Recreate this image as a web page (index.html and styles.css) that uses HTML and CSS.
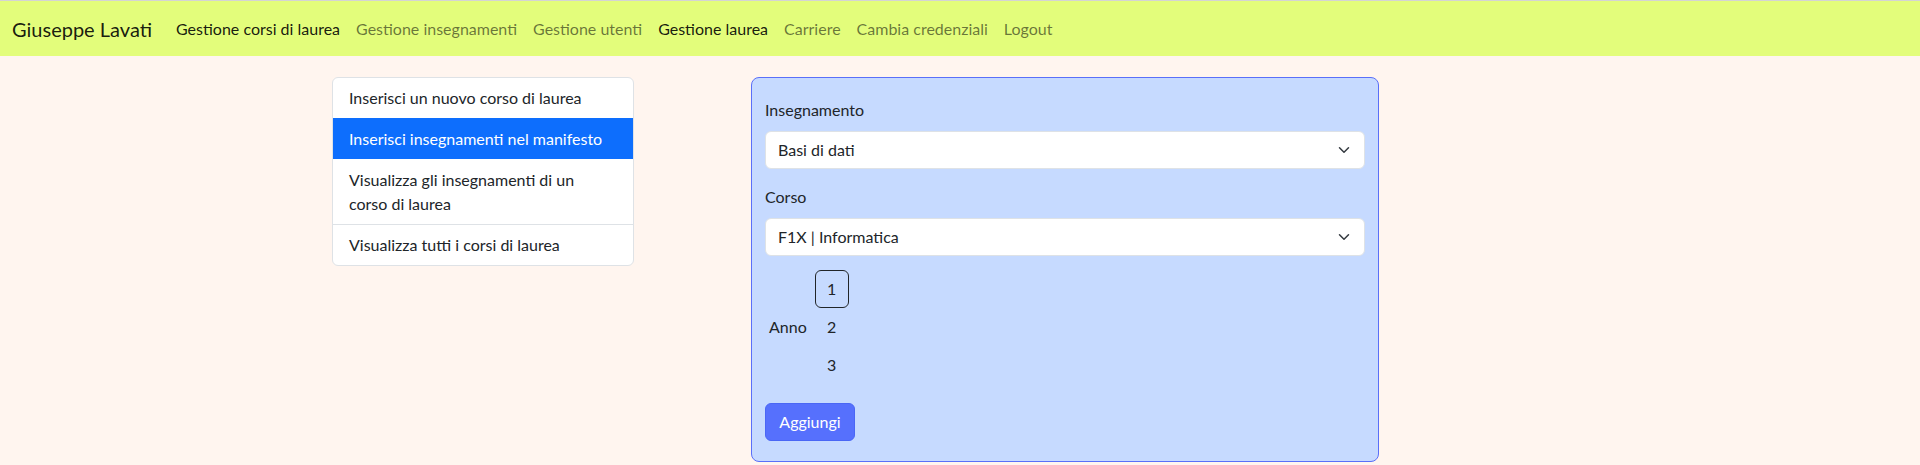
FILE: index.html
```html
<!DOCTYPE html>
<html lang="it">
<head>
<meta charset="utf-8">
<title>Gestione laurea</title>
<link rel="stylesheet" href="styles.css">
</head>
<body>
<nav class="navbar">
  <span class="brand">Giuseppe Lavati</span>
  <ul class="nav">
    <li><a class="nav-link active" href="#">Gestione corsi di laurea</a></li>
    <li><a class="nav-link" href="#">Gestione insegnamenti</a></li>
    <li><a class="nav-link" href="#">Gestione utenti</a></li>
    <li><a class="nav-link active" href="#">Gestione laurea</a></li>
    <li><a class="nav-link" href="#">Carriere</a></li>
    <li><a class="nav-link" href="#">Cambia credenziali</a></li>
    <li><a class="nav-link" href="#">Logout</a></li>
  </ul>
</nav>
<main class="main">
  <div class="list-group">
    <a class="list-item" href="#">Inserisci un nuovo corso di laurea</a>
    <a class="list-item selected" href="#">Inserisci insegnamenti nel manifesto</a>
    <a class="list-item" href="#">Visualizza gli insegnamenti di un corso di laurea</a>
    <a class="list-item" href="#">Visualizza tutti i corsi di laurea</a>
  </div>
  <form class="card">
    <label class="form-label">Insegnamento</label>
    <div class="select">
      <span>Basi di dati</span>
      <svg class="chev" viewBox="0 0 16 16" width="16" height="12"><path d="m2 5 6 6 6-6" fill="none" stroke="#343a40" stroke-width="2" stroke-linecap="round" stroke-linejoin="round"/></svg>
    </div>
    <label class="form-label second">Corso</label>
    <div class="select">
      <span>F1X | Informatica</span>
      <svg class="chev" viewBox="0 0 16 16" width="16" height="12"><path d="m2 5 6 6 6-6" fill="none" stroke="#343a40" stroke-width="2" stroke-linecap="round" stroke-linejoin="round"/></svg>
    </div>
    <div class="anno-row">
      <span class="anno-label">Anno</span>
      <div class="btn-group">
        <span class="radio-btn checked">1</span>
        <span class="radio-btn">2</span>
        <span class="radio-btn">3</span>
      </div>
    </div>
    <button type="button" class="btn-submit">Aggiungi</button>
  </form>
</main>
</body>
</html>
```
FILE: styles.css
```css
* { box-sizing: border-box; }
html, body { margin: 0; padding: 0; }
body {
  background: #fff5ef;
  font-family: Lato, "Liberation Sans", Arial, sans-serif;
  font-size: 16px;
  line-height: 24px;
  color: #212529;
}
.navbar {
  display: flex;
  align-items: center;
  height: 56px;
  border-top: 1px solid #d4d4d4;
  background: #e3fd7b;
  padding: 0 12px;
}
.brand {
  font-size: 20px;
  line-height: 30px;
  color: rgba(0,0,0,0.9);
  margin-right: 16px;
}
.nav {
  display: flex;
  list-style: none;
  margin: 0;
  padding: 0;
}
.nav-link {
  display: block;
  padding: 8px;
  color: rgba(0,0,0,0.55);
  text-decoration: none;
}
.nav-link.active { color: rgba(0,0,0,0.9); }

.main {
  display: flex;
  align-items: flex-start;
  gap: 117px;
  padding: 21px 0 0 332px;
}
.list-group {
  width: 302px;
  display: flex;
  flex-direction: column;
  background: #fff;
  border: 1px solid #dee2e6;
  border-radius: 6px;
  overflow: hidden;
}
.list-item {
  display: block;
  padding: 8px 28px 8px 16px;
  color: #212529;
  text-decoration: none;
  border-top: 1px solid #dee2e6;
}
.list-item:first-child { border-top: none; }
.list-item.selected {
  background: #0d6efd;
  color: #fff;
  border-top-color: #0d6efd;
}
.list-item.selected + .list-item { border-top-color: transparent; }

.card {
  width: 628px;
  margin: 0;
  background: #c6daff;
  border: 1px solid #5a6ff9;
  border-radius: 8px;
  padding: 20px 13px 20px;
  display: flex;
  flex-direction: column;
  align-items: flex-start;
}
.form-label {
  display: block;
  margin-bottom: 9px;
}
.form-label.second { margin-top: 16px; }
.select {
  width: 100%;
  height: 38px;
  display: flex;
  align-items: center;
  justify-content: space-between;
  background: #fff;
  border: 1px solid #dee2e6;
  border-radius: 6px;
  padding: 0 12px;
}
.anno-row {
  display: flex;
  align-items: center;
  margin-top: 14px;
  padding-left: 4px;
  gap: 8px;
}
.btn-group {
  display: flex;
  flex-direction: column;
}
.radio-btn {
  width: 34px;
  height: 38px;
  display: flex;
  align-items: center;
  justify-content: center;
  border: 1px solid transparent;
  border-radius: 6px;
}
.radio-btn.checked { border-color: #212529; }
.btn-submit {
  margin-top: 19px;
  height: 38px;
  padding: 0 11px;
  width: 90px;
  font: inherit;
  color: #fff;
  background: #5670fd;
  border: 1px solid #4a66f5;
  border-radius: 6px;
}
```
